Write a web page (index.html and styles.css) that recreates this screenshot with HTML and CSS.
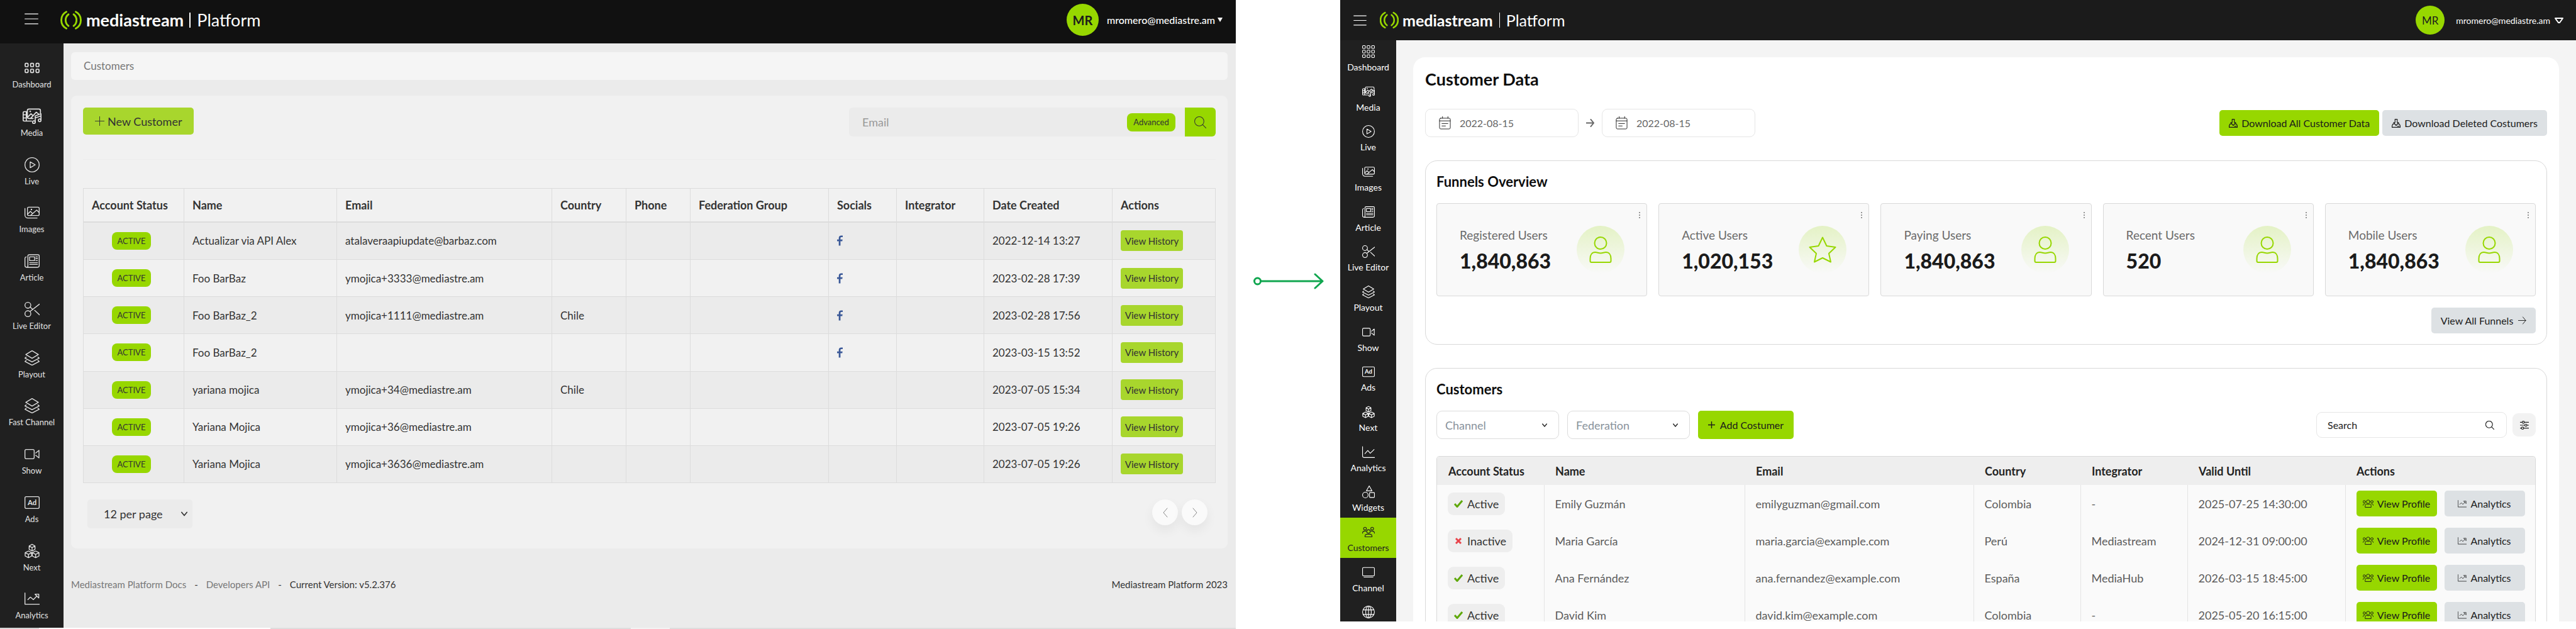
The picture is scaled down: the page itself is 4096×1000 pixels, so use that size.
FILE: index.html
```html
<!DOCTYPE html>
<html lang="en">
<head>
<meta charset="utf-8">
<title>Mediastream Platform - Customers</title>
<link rel="stylesheet" href="styles.css">
</head>
<body>
<svg class="sprite" aria-hidden="true">
  <symbol id="logo" viewBox="0 0 58 52"><g stroke-width="5" stroke-linecap="round"><path d="M16 3A26 26 0 0 0 16 49"/><path d="M22 10A20 20 0 0 0 22 42"/><path d="M42 3A26 26 0 0 1 42 49"/><path d="M36 10A20 20 0 0 1 36 42"/></g></symbol>
  <symbol id="menu" viewBox="0 0 36 30"><path d="M0 2H36M0 15H36M0 28H36"/></symbol>
  <symbol id="grid6" viewBox="0 0 36 36"><g stroke-width="2.6"><rect x="1.500" y="7" width="7" height="8" rx="2"/><rect x="14.500" y="7" width="7" height="8" rx="2"/><rect x="27.500" y="7" width="7" height="8" rx="2"/><rect x="1.500" y="21" width="7" height="8" rx="2"/><rect x="14.500" y="21" width="7" height="8" rx="2"/><rect x="27.500" y="21" width="7" height="8" rx="2"/></g></symbol>
  <symbol id="grid9" viewBox="0 0 36 36"><rect x="1" y="1" width="8" height="8" rx="2"/><rect x="14" y="1" width="8" height="8" rx="2"/><rect x="27" y="1" width="8" height="8" rx="2"/><rect x="1" y="14" width="8" height="8" rx="2"/><rect x="14" y="14" width="8" height="8" rx="2"/><rect x="27" y="14" width="8" height="8" rx="2"/><rect x="1" y="27" width="8" height="8" rx="2"/><rect x="14" y="27" width="8" height="8" rx="2"/><rect x="27" y="27" width="8" height="8" rx="2"/></symbol>
  <symbol id="media" viewBox="0 -3 36 36"><path d="M9 6H3a2 2 0 0 0-2 2v14a2 2 0 0 0 2 2h14M7 6v18M1 12h6M1 18h6M34 8V4a3 3 0 0 0-3-3H12a3 3 0 0 0-3 3v12a3 3 0 0 0 3 3h8M10 16l6-6 4 4M15 19L26 7l5 4M24 26V14l11-4v12M24 18l11-4"/><circle cx="21.500" cy="26" r="2.500"/><circle cx="32.500" cy="22.500" r="2.500"/><circle cx="14.500" cy="5.500" r=".6"/></symbol>
  <symbol id="live" viewBox="0 0 36 36"><circle cx="18" cy="18" r="17"/><path d="M13.500 11v14l12-7z"/></symbol>
  <symbol id="images" viewBox="0 -4 36 36"><rect x="7" y="1" width="28" height="20" rx="3"/><path d="M1 4v16a7 7 0 0 0 7 7h22M8 17l6-6 4 4M14 21L29 8l6 6"/><circle cx="16.500" cy="6.500" r=".8"/></symbol>
  <symbol id="article" viewBox="0 -2 36 36"><path d="M5 31a3 3 0 0 0 3-3V4a3 3 0 0 1 3-3h21a3 3 0 0 1 3 3v23a4 4 0 0 1-4 4H5a4 4 0 0 1-4-4V10a4 4 0 0 1 3-4M27 6h4M27 10h4M27 15h4M12 20h19M12 24h19"/><rect x="12" y="6" width="12" height="9"/></symbol>
  <symbol id="cut" viewBox="0 0 36 36"><circle cx="8" cy="8" r="7"/><circle cx="8" cy="28" r="7"/><path d="M13 12l7 6M13 23L36 5M24 20l12 11"/></symbol>
  <symbol id="layers" viewBox="0 0 36 36"><path d="M18 1l15 9-15 9-15-9zM4 16l-3 2.500 17 9 17-9-3-2.500M4 24l-3 2.500 17 9 17-9-3-2.500"/></symbol>
  <symbol id="show" viewBox="0 -6 36 36"><rect x="1" y="1" width="22" height="22" rx="3"/><path d="M26.500 9.500l8-6.500v18l-8-6.500"/></symbol>
  <symbol id="next" viewBox="0 -1 36 36"><path d="M18 1l7 4v8l-7 4-7-4V5zM11 5l7 4 7-4M18 9v8M9.500 17l7.500 4v8l-7.500 4-8-4v-8zM1.500 21l8 4 7.500-4M9.500 25v8M26.500 17l8 4v8l-8 4-8-4v-8zM18.500 21l8 4 8-4M26.500 25v8"/></symbol>
  <symbol id="chart" viewBox="0 -2 36 36"><path d="M1 0v27a4 4 0 0 0 4 4h31M8 20l8-9 7 8 11-11"/></symbol>
  <symbol id="chart-up" viewBox="0 -3 36 36"><path d="M1 1v27h35M8 17l6-6 7 6 9-9M25 4h9v9z"/></symbol>
  <symbol id="widgets" viewBox="0 0 36 36"><path d="M20 1l8 14H12z"/><circle cx="9" cy="27" r="8"/><rect x="21" y="20" width="14" height="14" rx="1.500"/></symbol>
  <symbol id="customers" viewBox="0 -3 36 36"><circle cx="8" cy="5" r="4"/><circle cx="28.500" cy="5" r="4"/><circle cx="18" cy="13" r="5"/><path d="M1 18a6 6 0 0 1 6-6h4M35 18a6 6 0 0 0-6-6h-4M8 27v1.500h20V27c0-4-3-6-6-6h-8c-3 0-6 2-6 6z"/></symbol>
  <symbol id="people" viewBox="0 -5 36 36"><circle cx="5" cy="7" r="4"/><circle cx="31" cy="7" r="4"/><circle cx="18" cy="7" r="6"/><path d="M1 19c0-4 2-5 6-5M35 19c0-4-2-5-6-5M8 25v-4c0-4 2-6 5-6q5 1.500 10 0c3 0 5 2 5 6v4z"/></symbol>
  <symbol id="channel" viewBox="0 -3 36 36"><rect x="1" y="1" width="34" height="24" rx="3"/><path d="M5 28.500h26"/></symbol>
  <symbol id="globe" viewBox="0 0 36 36"><circle cx="18" cy="18" r="17"/><ellipse cx="18" cy="18" rx="8" ry="17"/><path d="M18 1v34M3 12h30M3 25h30"/></symbol>
  <symbol id="plus" viewBox="0 0 16 16"><path d="M8 0v16M0 8h16"/></symbol>
  <symbol id="search" viewBox="0 0 24 24"><circle cx="10" cy="10" r="9.300"/><path d="M17 17l7 7"/></symbol>
  <symbol id="calendar" viewBox="0 0 20 22"><rect x="1" y="3" width="18" height="18" rx="2"/><path d="M1 7.500h18M6 0v3M15 0v3M5 12h10M5 16h6"/></symbol>
  <symbol id="download" viewBox="0 0 24 24"><path d="M9 1h6v9h4l-7 8-7-8h4zM6 14H3l-2 5v4h22v-4l-2-5h-3M16 20h1M19 20h1"/></symbol>
  <symbol id="user" viewBox="0 0 37 42"><circle cx="18.500" cy="10.500" r="9.500"/><path d="M2 39v-4c0-6 3-10 8-10 3 0 5 1.500 8.500 1.500S24 25 27 25c5 0 8 4 8 10v4a2 2 0 0 1-2 2H4a2 2 0 0 1-2-2z"/></symbol>
  <symbol id="star" viewBox="0 0 44 42"><path d="M22 1.500l6.500 13.500 14 2-10.500 10 3 13.500-13-6.500-13 6.500 3-13.500L1.500 17l14-2z"/></symbol>
  <symbol id="check" viewBox="0 0 14 12"><path d="M1 6l4 4.500L13 1" stroke-width="3"/></symbol>
  <symbol id="cross" viewBox="0 0 14 12"><path d="M3 2l8 8M11 2l-8 8" stroke-width="3"/></symbol>
  <symbol id="arrow" viewBox="0 0 14 14"><path d="M0 7h13M8 1l5 6-5 6"/></symbol>
  <symbol id="down" viewBox="0 0 12 8"><path d="M1 1l5 6 5-6"/></symbol>
  <symbol id="sliders" viewBox="0 0 24 24"><path d="M0 4h6M12 4h12M0 12h13M19 12h5M0 20h4M10 20h14"/><circle cx="9" cy="4" r="3"/><circle cx="16" cy="12" r="3"/><circle cx="7" cy="20" r="3"/></symbol>
  <symbol id="facebook" viewBox="0 0 10 18"><path d="M3 18V10H0V7h3V4.500C3 1.500 4.700 0 7.300 0H10v3H8C6.500 3 6 3.600 6 4.800V7h3.700l-.5 3H6v8z"/></symbol>
</svg>

<main class="board">
  <section class="app old">
    <header class="topbar">
      <button class="burger" aria-label="Menu"><svg class="icon"><use href="#menu"/></svg></button>
      <a class="brand" href="#"><svg class="logo"><use href="#logo"/></svg><b>mediastream</b><i class="bar"></i><span>Platform</span></a>
      <div class="account"><span class="avatar">MR</span><a href="#">mromero@mediastre.am</a><i class="caret"></i></div>
    </header>
    <nav class="side">
      <ul>
        <li><a href="#"><svg class="icon"><use href="#grid6"/></svg>Dashboard</a></li>
        <li><a href="#"><svg class="icon big"><use href="#media"/></svg>Media</a></li>
        <li><a href="#"><svg class="icon"><use href="#live"/></svg>Live</a></li>
        <li><a href="#"><svg class="icon"><use href="#images"/></svg>Images</a></li>
        <li><a href="#"><svg class="icon"><use href="#article"/></svg>Article</a></li>
        <li><a href="#"><svg class="icon"><use href="#cut"/></svg>Live Editor</a></li>
        <li><a href="#"><svg class="icon"><use href="#layers"/></svg>Playout</a></li>
        <li><a href="#"><svg class="icon"><use href="#layers"/></svg>Fast Channel</a></li>
        <li><a href="#"><svg class="icon"><use href="#show"/></svg>Show</a></li>
        <li><a href="#"><svg class="icon" viewBox="0 -3 36 36"><rect x="1" y="1" width="34" height="28" rx="3"/><text x="18" y="21" text-anchor="middle" class="ad-text">Ad</text></svg>Ads</a></li>
        <li><a href="#"><svg class="icon"><use href="#next"/></svg>Next</a></li>
        <li><a href="#"><svg class="icon"><use href="#chart-up"/></svg>Analytics</a></li>
      </ul>
    </nav>
    <div class="content">
      <a class="crumb" href="#">Customers</a>
      <div class="panel">
        <div class="tools">
          <button class="new"><svg class="icon"><use href="#plus"/></svg>New Customer</button>
          <form class="find">
            <input type="text" placeholder="Email" aria-label="Email">
            <button type="button" class="advanced">Advanced</button>
            <button type="button" class="go" aria-label="Search"><svg class="icon"><use href="#search"/></svg></button>
          </form>
        </div>
        <table>
          <colgroup><col class="w160"><col class="w243"><col class="w342"><col class="w118"><col class="w102"><col class="w220"><col class="w108"><col class="w139"><col class="w204"><col class="w164"></colgroup>
          <thead><tr><th>Account Status</th><th>Name</th><th>Email</th><th>Country</th><th>Phone</th><th>Federation Group</th><th>Socials</th><th>Integrator</th><th>Date Created</th><th>Actions</th></tr></thead>
          <tbody>
            <tr><td><span class="tag">ACTIVE</span></td><td>Actualizar via API Alex</td><td>atalaveraapiupdate@barbaz.com</td><td></td><td></td><td></td><td><svg class="fb"><use href="#facebook"/></svg></td><td></td><td>2022-12-14 13:27</td><td><button class="history">View History</button></td></tr>
            <tr><td><span class="tag">ACTIVE</span></td><td>Foo BarBaz</td><td>ymojica+3333@mediastre.am</td><td></td><td></td><td></td><td><svg class="fb"><use href="#facebook"/></svg></td><td></td><td>2023-02-28 17:39</td><td><button class="history">View History</button></td></tr>
            <tr><td><span class="tag">ACTIVE</span></td><td>Foo BarBaz_2</td><td>ymojica+1111@mediastre.am</td><td>Chile</td><td></td><td></td><td><svg class="fb"><use href="#facebook"/></svg></td><td></td><td>2023-02-28 17:56</td><td><button class="history">View History</button></td></tr>
            <tr><td><span class="tag">ACTIVE</span></td><td>Foo BarBaz_2</td><td></td><td></td><td></td><td></td><td><svg class="fb"><use href="#facebook"/></svg></td><td></td><td>2023-03-15 13:52</td><td><button class="history">View History</button></td></tr>
            <tr><td><span class="tag">ACTIVE</span></td><td>yariana mojica</td><td>ymojica+34@mediastre.am</td><td>Chile</td><td></td><td></td><td></td><td></td><td>2023-07-05 15:34</td><td><button class="history">View History</button></td></tr>
            <tr><td><span class="tag">ACTIVE</span></td><td>Yariana Mojica</td><td>ymojica+36@mediastre.am</td><td></td><td></td><td></td><td></td><td></td><td>2023-07-05 19:26</td><td><button class="history">View History</button></td></tr>
            <tr><td><span class="tag">ACTIVE</span></td><td>Yariana Mojica</td><td>ymojica+3636@mediastre.am</td><td></td><td></td><td></td><td></td><td></td><td>2023-07-05 19:26</td><td><button class="history">View History</button></td></tr>
          </tbody>
        </table>
        <div class="pager">
          <div class="picker"><select aria-label="Rows per page"><option>12 per page</option></select><svg class="icon"><use href="#down"/></svg></div>
          <div class="pages">
            <button aria-label="Previous"><svg viewBox="0 0 8 16"><path d="M7 1L1 8l6 7"/></svg></button>
            <button aria-label="Next"><svg viewBox="0 0 8 16"><path d="M1 1l6 7-6 7"/></svg></button>
          </div>
        </div>
      </div>
      <footer>
        <p><a href="#">Mediastream Platform Docs</a><span>-</span><a href="#">Developers API</a><span>-</span>Current Version: v5.2.376</p>
        <p>Mediastream Platform 2023</p>
      </footer>
    </div>
    <div class="strip"></div>
  </section>

  <div class="between"><svg viewBox="0 0 112 26"><circle cx="6.500" cy="13" r="5"/><path d="M12 13H110M98 2l12 11-12 11"/></svg></div>

  <section class="app fresh">
    <header class="topbar">
      <button class="burger" aria-label="Menu"><svg class="icon"><use href="#menu"/></svg></button>
      <a class="brand" href="#"><svg class="logo"><use href="#logo"/></svg><b>mediastream</b><i class="bar"></i><span>Platform</span></a>
      <div class="account"><span class="avatar">MR</span><a href="#">mromero@mediastre.am</a><svg class="tri" viewBox="0 0 14 9"><path d="M1 1h12L8 8H6z"/></svg></div>
    </header>
    <nav class="side">
      <ul>
        <li><a href="#"><svg class="icon"><use href="#grid9"/></svg>Dashboard</a></li>
        <li><a href="#"><svg class="icon"><use href="#media"/></svg>Media</a></li>
        <li><a href="#"><svg class="icon"><use href="#live"/></svg>Live</a></li>
        <li><a href="#"><svg class="icon"><use href="#images"/></svg>Images</a></li>
        <li><a href="#"><svg class="icon"><use href="#article"/></svg>Article</a></li>
        <li><a href="#"><svg class="icon"><use href="#cut"/></svg>Live Editor</a></li>
        <li><a href="#"><svg class="icon"><use href="#layers"/></svg>Playout</a></li>
        <li><a href="#"><svg class="icon"><use href="#show"/></svg>Show</a></li>
        <li><a href="#"><svg class="icon" viewBox="0 -3 36 36"><rect x="1" y="1" width="34" height="28" rx="3"/><text x="18" y="21" text-anchor="middle" class="ad-text">Ad</text></svg>Ads</a></li>
        <li><a href="#"><svg class="icon"><use href="#next"/></svg>Next</a></li>
        <li><a href="#"><svg class="icon"><use href="#chart"/></svg>Analytics</a></li>
        <li><a href="#"><svg class="icon"><use href="#widgets"/></svg>Widgets</a></li>
        <li class="active"><a href="#"><svg class="icon"><use href="#customers"/></svg>Customers</a></li>
        <li><a href="#"><svg class="icon"><use href="#channel"/></svg>Channel</a></li>
        <li><a href="#" aria-label="Web"><svg class="icon"><use href="#globe"/></svg></a></li>
      </ul>
    </nav>
    <div class="content">
      <div class="sheet">
        <h1>Customer Data</h1>
        <div class="range">
          <label class="date"><svg class="icon"><use href="#calendar"/></svg><input type="text" value="2022-08-15" aria-label="From"></label>
          <svg class="icon to"><use href="#arrow"/></svg>
          <label class="date"><svg class="icon"><use href="#calendar"/></svg><input type="text" value="2022-08-15" aria-label="To"></label>
          <div class="exports">
            <button class="btn green"><svg class="icon"><use href="#download"/></svg>Download All Customer Data</button>
            <button class="btn grey"><svg class="icon"><use href="#download"/></svg>Download Deleted Costumers</button>
          </div>
        </div>
        <section class="card">
          <h2>Funnels Overview</h2>
          <div class="stats">
            <article><div><span>Registered Users</span><strong>1,840,863</strong></div><div class="disc"><svg><use href="#user"/></svg></div><button class="kebab" aria-label="More"><i></i><i></i><i></i></button></article>
            <article><div><span>Active Users</span><strong>1,020,153</strong></div><div class="disc"><svg><use href="#star"/></svg></div><button class="kebab" aria-label="More"><i></i><i></i><i></i></button></article>
            <article><div><span>Paying Users</span><strong>1,840,863</strong></div><div class="disc"><svg><use href="#user"/></svg></div><button class="kebab" aria-label="More"><i></i><i></i><i></i></button></article>
            <article><div><span>Recent Users</span><strong>520</strong></div><div class="disc"><svg><use href="#user"/></svg></div><button class="kebab" aria-label="More"><i></i><i></i><i></i></button></article>
            <article><div><span>Mobile Users</span><strong>1,840,863</strong></div><div class="disc"><svg><use href="#user"/></svg></div><button class="kebab" aria-label="More"><i></i><i></i><i></i></button></article>
          </div>
          <button class="btn grey all">View All Funnels<svg class="icon"><use href="#arrow"/></svg></button>
        </section>
        <section class="card list">
          <h2>Customers</h2>
          <div class="filters">
            <div class="picker"><select aria-label="Channel"><option>Channel</option></select><svg class="icon"><use href="#down"/></svg></div>
            <div class="picker"><select aria-label="Federation"><option>Federation</option></select><svg class="icon"><use href="#down"/></svg></div>
            <button class="btn green add"><svg class="icon"><use href="#plus"/></svg>Add Costumer</button>
            <label class="search"><input type="text" placeholder="Search" aria-label="Search"><svg class="icon"><use href="#search"/></svg></label>
            <button class="tune" aria-label="Filters"><svg class="icon"><use href="#sliders"/></svg></button>
          </div>
          <div class="frame">
            <table>
              <colgroup><col class="w170"><col class="w319"><col class="w364"><col class="w170"><col class="w170"><col class="w251"><col class="w305"></colgroup>
              <thead><tr><th>Account Status</th><th>Name</th><th>Email</th><th>Country</th><th>Integrator</th><th>Valid Until</th><th>Actions</th></tr></thead>
              <tbody>
                <tr><td><span class="state"><svg class="ok"><use href="#check"/></svg>Active</span></td><td>Emily Guzmán</td><td>emilyguzman@gmail.com</td><td>Colombia</td><td>-</td><td>2025-07-25 14:30:00</td><td><div class="acts"><button class="btn green"><svg class="icon wide"><use href="#people"/></svg>View Profile</button><button class="btn grey"><svg class="icon"><use href="#chart-up"/></svg>Analytics</button></div></td></tr>
                <tr><td><span class="state"><svg class="no"><use href="#cross"/></svg>Inactive</span></td><td>Maria García</td><td>maria.garcia@example.com</td><td>Perú</td><td>Mediastream</td><td>2024-12-31 09:00:00</td><td><div class="acts"><button class="btn green"><svg class="icon wide"><use href="#people"/></svg>View Profile</button><button class="btn grey"><svg class="icon"><use href="#chart-up"/></svg>Analytics</button></div></td></tr>
                <tr><td><span class="state"><svg class="ok"><use href="#check"/></svg>Active</span></td><td>Ana Fernández</td><td>ana.fernandez@example.com</td><td>España</td><td>MediaHub</td><td>2026-03-15 18:45:00</td><td><div class="acts"><button class="btn green"><svg class="icon wide"><use href="#people"/></svg>View Profile</button><button class="btn grey"><svg class="icon"><use href="#chart-up"/></svg>Analytics</button></div></td></tr>
                <tr><td><span class="state"><svg class="ok"><use href="#check"/></svg>Active</span></td><td>David Kim</td><td>david.kim@example.com</td><td>Colombia</td><td>-</td><td>2025-05-20 16:15:00</td><td><div class="acts"><button class="btn green"><svg class="icon wide"><use href="#people"/></svg>View Profile</button><button class="btn grey"><svg class="icon"><use href="#chart-up"/></svg>Analytics</button></div></td></tr>
              </tbody>
            </table>
          </div>
        </section>
      </div>
    </div>
  </section>
</main>
</body>
</html>
```
FILE: styles.css
```css
* { box-sizing: border-box; }
body { margin: 0; background: #fff; color: #333; font-family: Lato, "Open Sans", sans-serif; }
a { color: inherit; text-decoration: none; }
button, input, select { font: inherit; color: inherit; border: 0; margin: 0; padding: 0; background: none; }
select { appearance: none; }
h1, h2, p, ul { margin: 0; padding: 0; }
ul { list-style: none; }
svg { display: block; flex: none; fill: none; stroke: currentColor; stroke-width: 2; stroke-linejoin: round; stroke-linecap: round; }
.sprite { position: absolute; width: 0; height: 0; }
.ad-text { font-size: 17px; font-weight: 700; fill: currentColor; stroke: none; }

.board { display: grid; grid-template-columns: 1965fr 166fr 1965fr; height: 100vh; overflow: hidden; }
.app { display: grid; min-width: 0; overflow: hidden; }
.between { display: flex; align-items: flex-start; padding: 434px 0 0 28px; }
.between svg { width: 112px; height: 26px; color: #10a64f; stroke-width: 3; }

/* top bar */
.topbar { grid-column: 1 / -1; display: flex; align-items: center; color: #fff; }
.burger .icon { display: block; stroke-linecap: butt; }
.brand { display: flex; align-items: center; }
.logo { color: #97d700; }
.bar { width: 2px; height: 24px; background: #fff; }
.account { display: flex; align-items: center; margin-left: auto; }
.avatar { display: grid; place-items: center; border-radius: 50%; background: #97d700; color: #1b1b1b; }

/* side menu */
.side { overflow: hidden; background: #202020; }
.side ul { display: grid; grid-auto-rows: 1fr; }
.side a { display: flex; flex-direction: column; align-items: center; }

/* current customers screen */
.old { grid-template: 69px 1fr 2px / 101px 1fr; background: #ebebeb; }
.old .topbar { background: #111; padding: 0 21px 6px 39px; }
.old .burger .icon { width: 22px; height: 18px; margin-top: -4px; }
.old .logo { width: 34px; height: 30px; margin: 0 7px 0 35px; }
.old .brand { font-size: 27px; line-height: 32px; }
.old .bar { margin: 0 10px 0 9px; }
.old .avatar { width: 51px; height: 51px; font-size: 20px; font-weight: 700; margin-right: 13px; }
.old .account { font-size: 16px; font-weight: 500; }
.caret { border: 4px solid transparent; border-top: 7px solid #fff; border-bottom: 0; margin-left: 4px; }
.old .side { color: #e2e2e2; font-size: 13px; line-height: 16px; }
.old .side ul { height: 921px; margin-top: 5px; }
.old .side .icon { width: 24px; height: 24px; margin: 22px 0 6px; }
.old .side .big { width: 30px; height: 30px; margin: 19px 0 3px; }
.old .content { display: flex; flex-direction: column; padding: 14px 13px 0 12px; font-size: 17px; }
.crumb { padding: 11px 20px; height: 44px; line-height: 22px; border-radius: 6px; background: #f5f5f5; color: #777; margin-bottom: 25px; }
.panel { background: #f1f1f1; border-radius: 9px; padding: 19px 19px 0; height: 720px; }
.tools { display: flex; justify-content: space-between; align-items: flex-start; height: 83px; border-bottom: 1px solid #ececec; margin-bottom: 45px; }
.new { display: flex; align-items: center; gap: 5px; height: 43px; padding: 0 19px; border-radius: 5px; background: #a8d62d; font-size: 18px; }
.new .icon { width: 15px; height: 15px; stroke-width: 1; }
.find { display: flex; align-items: center; width: 583px; height: 46px; border-radius: 6px; background: #ebebeb; overflow: hidden; }
.find input { flex: 1; min-width: 0; padding-left: 21px; font-size: 18px; }
.find input::placeholder { color: #999; opacity: 1; }
.advanced { width: 77px; height: 29px; margin-right: 15px; border-radius: 8px; background: #97d700; font-size: 13px; }
.go { display: grid; place-items: center; width: 49px; height: 46px; background: #97d700; }
.go .icon { width: 19px; height: 19px; stroke-width: 1.3; }
table { width: 100%; table-layout: fixed; border-collapse: collapse; }
th, td { text-align: left; vertical-align: middle; overflow: hidden; white-space: nowrap; }
.old table { height: 469px; border: 1px solid #dcdcdc; }
.old th, .old td { padding: 0 13px; border: 1px solid #dcdcdc; }
.old th { height: 53px; border-bottom: 2px solid #dcdcdc; font-size: 18px; }
.old tbody tr:nth-child(odd) { background: #ebebeb; }
.tag { display: block; width: 62px; height: 28px; line-height: 28px; margin-left: 32px; text-align: center; border-radius: 8px; background: #97d700; font-size: 13px; }
.fb { width: 9px; height: 17px; fill: #3b5998; stroke: none; }
.history { display: block; width: 99px; height: 33px; border-radius: 4px; background: #a8d62d; font-size: 15px; }
.pager { display: flex; justify-content: space-between; align-items: flex-start; padding: 26px 13px 0 7px; }
.picker { position: relative; }
.picker select { width: 100%; height: 100%; }
.picker .icon { position: absolute; top: 50%; translate: 0 -50%; pointer-events: none; }
.old .picker { width: 167px; height: 46px; border-radius: 5px; background: #ebebeb; font-size: 18px; }
.old .picker select { padding-left: 26px; }
.old .picker .icon { right: 8px; width: 10px; height: 8px; }
.pages { display: flex; gap: 6px; }
.pages button { display: grid; place-items: center; width: 41px; height: 41px; border-radius: 50%; background: #fafafa; box-shadow: 0 8px 18px rgba(0, 0, 0, .06); color: #888; }
.pages svg { width: 8px; height: 16px; stroke-width: 1; }
footer { display: flex; justify-content: space-between; margin-top: 46px; font-size: 15px; line-height: 22px; }
footer a { color: #777; }
footer span { margin: 0 13px; }
.strip { grid-column: 1 / -1; background: linear-gradient(90deg, #d5d5d5 62px, #fff 62px 430px, #dedede 430px 1003px, #f3f3f3 1003px 1065px, #dedede 1065px); }

/* proposed customers screen */
.fresh { grid-template: 64px 1fr / 89px 1fr; background: #f4f4f4; margin-bottom: 12px; }
.fresh .topbar { background: #1b1b1b; padding: 0 20px 0 21px; }
.fresh .burger .icon { width: 21px; height: 17px; }
.fresh .logo { width: 30px; height: 28px; margin: 0 6px 0 21px; }
.fresh .brand { font-size: 25px; line-height: 30px; }
.fresh .bar { width: 1px; margin: 0 10px; }
.fresh .avatar { width: 46px; height: 46px; font-size: 17px; margin-right: 18px; }
.fresh .account { font-size: 14px; }
.tri { width: 14px; height: 9px; margin-left: 7px; }
.fresh .side { color: #fff; font-size: 14px; line-height: 18px; }
.fresh .side ul { height: 955px; margin-top: -5px; }
.fresh .side a { height: 100%; }
.fresh .side .icon { width: 20px; height: 20px; margin: 13px 0 6px; }
.active { background: #97d700; color: #222; }
.fresh .content { padding: 27px 27px 0; min-height: 0; overflow: hidden; }
.sheet { height: 100%; padding: 18px 19px 0; border-radius: 19px 19px 0 0; background: #fff; display: flex; flex-direction: column; }
h1 { font-size: 27px; line-height: 34px; color: #0d0d0d; }
.range { display: flex; align-items: center; margin: 30px 0 37px; color: #666; }
.date { display: flex; align-items: center; gap: 14px; width: 244px; height: 45px; padding-left: 21px; border: 1px solid #e6e6e6; border-radius: 9px; font-size: 16px; }
.date .icon { width: 19px; height: 21px; color: #222; stroke-width: 1; }
.date input { min-width: 0; width: 160px; }
.to { width: 13px; height: 13px; margin: 0 12px; }
.exports { display: flex; gap: 5px; margin-left: auto; }
.btn { display: flex; align-items: center; justify-content: center; gap: 6px; height: 41px; border-radius: 5px; font-size: 16px; color: #1b1b1b; white-space: nowrap; }
.btn .icon { width: 14px; height: 14px; }
.green { background: #97d700; }
.grey { background: #dde1e4; }
.exports .btn { padding: 0 15px; }
.card { flex: none; border: 1px solid #d9d9d9; border-radius: 19px; padding: 19px 17px 17px; margin-bottom: 37px; }
h2 { font-size: 22px; line-height: 28px; color: #0d0d0d; }
.stats { display: grid; grid-template-columns: repeat(5, 1fr); gap: 18px; margin: 20px 0 18px; }
.stats article { position: relative; display: flex; align-items: center; justify-content: space-between; height: 148px; padding: 0 35px 0 36px; border: 1px solid #d9d9d9; border-radius: 4px; background: #f9f9f9; }
.stats span { display: block; font-size: 19px; line-height: 24px; color: #6b6b6b; margin: 2px 0 10px; }
.stats strong { display: block; font-size: 32px; line-height: 38px; font-weight: 900; color: #1b1b1b; }
.disc { display: grid; place-items: center; width: 76px; height: 76px; border-radius: 50%; background: linear-gradient(#e4f2c5, #f9f9f9); color: #97d700; }
.disc svg { width: 44px; height: 42px; }
.kebab { position: absolute; top: 13px; right: 10px; display: grid; gap: 2px; }
.kebab i { width: 2px; height: 2px; border-radius: 50%; background: #777; }
.all { width: 166px; margin-left: auto; gap: 8px; }
.all .icon { width: 13px; height: 13px; stroke-width: 1; }
.list { padding-bottom: 0; }
.filters { display: flex; align-items: center; gap: 13px; margin: 20px 0 27px; }
.fresh .picker { width: 195px; height: 45px; border: 1px solid #dcdcdc; border-radius: 9px; color: #88929b; font-size: 18px; }
.fresh .picker select { padding-left: 13px; }
.fresh .picker .icon { right: 18px; width: 8px; height: 6px; color: #222; }
.add { width: 152px; height: 45px; gap: 8px; }
.add .icon { width: 11px; height: 11px; }
.search { display: flex; align-items: center; width: 303px; height: 41px; margin: 0 -4px 0 auto; padding: 0 19px 0 17px; border: 1px solid #e6e6e6; border-radius: 9px; font-size: 16px; color: #222; }
.search input { flex: 1; min-width: 0; }
.search input::placeholder { color: #222; opacity: 1; }
.search .icon { width: 14px; height: 14px; }
.tune { display: grid; place-items: center; width: 37px; height: 37px; border-radius: 9px; background: #f2f2f2; color: #222; }
.tune .icon { width: 14px; height: 14px; }
.frame { border: 1px solid #d9d9d9; border-bottom: 0; border-radius: 5px 5px 0 0; overflow: hidden; }
.frame th { height: 45px; padding: 0 18px; background: #eee; color: #222; font-size: 18px; }
.frame td { height: 59px; padding: 0 17px; background: #fafafa; color: #5c5c5c; font-size: 18px; }
.frame td + td { border-left: 1px solid #e4e4e4; }
.state { display: inline-flex; align-items: center; gap: 7px; height: 36px; padding: 0 10px; border-radius: 9px; background: #eee; color: #333; vertical-align: middle; }
.state svg { width: 14px; height: 12px; stroke-linecap: butt; stroke-linejoin: miter; }
.ok { color: #5fa80a; }
.no { color: #e8434a; }
.acts { display: flex; gap: 12px; }
.acts .btn { width: 128px; }
.acts .wide { width: 17px; height: 17px; }

/* column widths, shared out over the table */
.w102 { width: 102px; }
.w108 { width: 108px; }
.w118 { width: 118px; }
.w139 { width: 139px; }
.w160 { width: 160px; }
.w164 { width: 164px; }
.w170 { width: 170px; }
.w204 { width: 204px; }
.w220 { width: 220px; }
.w243 { width: 243px; }
.w251 { width: 251px; }
.w305 { width: 305px; }
.w319 { width: 319px; }
.w342 { width: 342px; }
.w364 { width: 364px; }
```
